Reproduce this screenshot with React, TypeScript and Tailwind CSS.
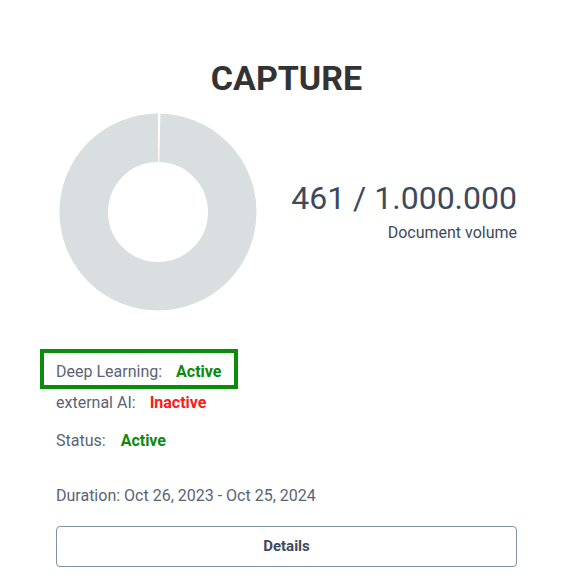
export default function App() {
  const used = 461;
  const total = 1000000;
  const r = 75;
  const c = 2 * Math.PI * r;
  const frac = Math.max(used / total, 0.004);

  return (
    <div className="min-h-screen bg-white font-['Roboto',sans-serif] text-[#3c4858]">
      <div className="pl-[56px] pr-[55px] pt-[57px]">
        <h1 className="text-center text-[34px] font-bold leading-[42px] text-[#333333]">CAPTURE</h1>

        <div className="mt-[14px] flex items-center justify-between">
          <svg width="198" height="198" viewBox="0 0 200 200" className="ml-[3px]">
            <circle cx="100" cy="100" r={r} fill="none" stroke="#d9dfe1" strokeWidth="49" />
            <circle
              cx="100"
              cy="100"
              r={r}
              fill="none"
              stroke="#ffffff"
              strokeWidth="49"
              strokeDasharray={`${c * frac} ${c}`}
              transform="rotate(-90 100 100)"
            />
          </svg>
          <div className="flex flex-col items-end pb-[2px]">
            <div className="text-[32px] leading-[38px] text-[#3d4a5c]">461 / 1.000.000</div>
            <div className="mt-[5px] text-[16px] leading-[22px] text-[#3d4a5c]">Document volume</div>
          </div>
        </div>

        <div className="mt-[38px] whitespace-nowrap text-[16px] text-[#5a6474]">
          <div className="-ml-[16px] flex h-[40px] w-fit items-center border-4 border-[#0b8c0b] pl-[12px] pr-[13px] pt-[5px]">
            <span>Deep Learning:</span>
            <span className="ml-[14px] font-bold text-[#0b8a0b]">Active</span>
          </div>
          <div className="mt-[2px] flex h-[24px] items-center">
            <span>external AI:</span>
            <span className="ml-[14px] font-bold text-[#ff1a1a]">Inactive</span>
          </div>
          <div className="mt-[14px] flex h-[24px] items-center">
            <span>Status:</span>
            <span className="ml-[15px] font-bold text-[#0b8a0b]">Active</span>
          </div>
          <div className="mt-[31px] flex h-[24px] items-center">Duration: Oct 26, 2023 - Oct 25, 2024</div>
        </div>

        <button className="mt-[18px] flex h-[41px] w-full items-center justify-center rounded-[4px] border border-[#8290a6] bg-white text-[15px] font-bold text-[#3d4a5c]">
          Details
        </button>
      </div>
    </div>
  );
}
